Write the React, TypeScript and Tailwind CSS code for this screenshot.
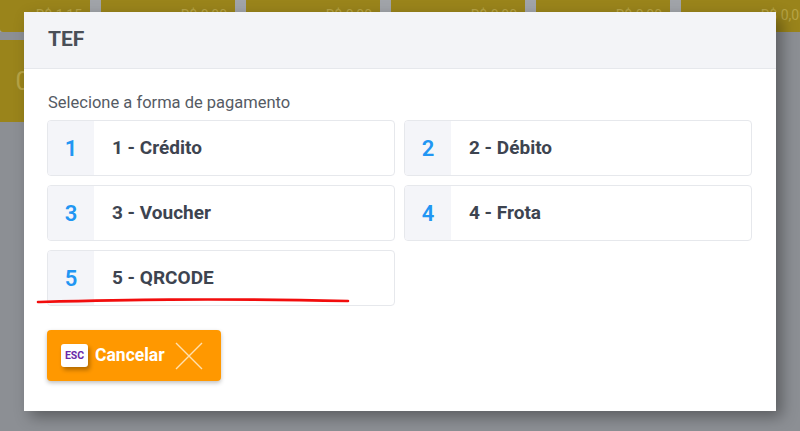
import React from 'react';

const options = [
  { key: '1', label: '1 - Crédito' },
  { key: '2', label: '2 - Débito' },
  { key: '3', label: '3 - Voucher' },
  { key: '4', label: '4 - Frota' },
  { key: '5', label: '5 - QRCODE' },
];

const bgCards = ['R$ 1,15', 'R$ 0,00', 'R$ 0,00', 'R$ 0,00', 'R$ 0,00', 'R$ 0,00'];

export default function App() {
  return (
    <div className="relative w-[800px] h-[431px] overflow-hidden bg-[#8c8f94]" style={{ fontFamily: 'Roboto, "Noto Sans", sans-serif' }}>
      {/* page behind the dialog (already dimmed) */}
      <div className="flex gap-[11px] h-[32px] bg-[#a1a4a9]">
        {bgCards.map((v, i) => (
          <div key={i} className={`${i === 0 ? 'w-[90px]' : 'w-[134px]'} shrink-0 bg-[#9a841b] rounded-b-[3px] flex items-end justify-end pr-[8px] pb-[10px]`}>
            <span className="text-[14px] leading-none text-[#b8a445]">{v}</span>
          </div>
        ))}
      </div>
      <div className="w-[24px] h-[82px] mt-[8px] bg-[#9a841b] flex items-center justify-end">
        <span className="text-[26px] text-[#b8a445] leading-none -mr-[6px]">0</span>
      </div>

      {/* dialog */}
      <div className="absolute left-[24px] top-[12px] w-[752px] h-[399px] bg-white shadow-[6px_6px_14px_rgba(0,0,0,0.35)] flex flex-col">
        <div className="h-[57px] shrink-0 bg-[#f3f4f7] border-b border-[#e6e8ec] flex items-center px-[24px]">
          <span className="text-[21px] font-bold text-[#4a4f57]">TEF</span>
        </div>
        <div className="flex flex-col px-[23px] pt-[24px]">
          <p className="text-[16.5px] leading-[20px] text-[#555b64] pl-[1px]">Selecione a forma de pagamento</p>
          <div className="grid grid-cols-2 gap-x-[9px] gap-y-[9px] mt-[7px] w-[705px]">
            {options.map((o) => (
              <div key={o.key} className="h-[56px] flex border border-[#e6e8ec] rounded-[4px] overflow-hidden bg-white">
                <div className="w-[46px] shrink-0 bg-[#f4f5f9] flex items-center justify-center">
                  <span className="text-[22px] font-semibold text-[#2196f3]">{o.key}</span>
                </div>
                <div className="flex items-center pl-[18px]">
                  <span className="text-[19px] font-bold text-[#3d4450]">{o.label}</span>
                </div>
              </div>
            ))}
          </div>
          <div className="mt-[24px]">
            <button className="w-[174px] h-[51px] bg-[#ff9800] rounded-[4px] shadow-[0_2px_4px_rgba(0,0,0,0.25)] flex items-center pl-[14px]">
              <span className="w-[27px] h-[23px] bg-white rounded-[3px] shadow-[2px_3px_4px_rgba(0,0,0,0.3)] flex items-center justify-center text-[10.5px] font-bold text-[#6a2aa8]">ESC</span>
              <span className="ml-[7px] text-[17.5px] font-bold text-white">Cancelar</span>
              <svg className="ml-[9px]" width="30" height="30" viewBox="0 0 30 30">
                <path d="M2 2 L28 28 M28 2 L2 28" stroke="#ffe1b0" strokeWidth="1.4" fill="none" />
              </svg>
            </button>
          </div>
        </div>
      </div>

      {/* red annotation line */}
      <svg className="absolute left-0 top-0 pointer-events-none" width="800" height="431">
        <path d="M38 302 C 120 300, 200 298, 348 301" stroke="#f20d0d" strokeWidth="2.6" fill="none" strokeLinecap="round" />
      </svg>
    </div>
  );
}
